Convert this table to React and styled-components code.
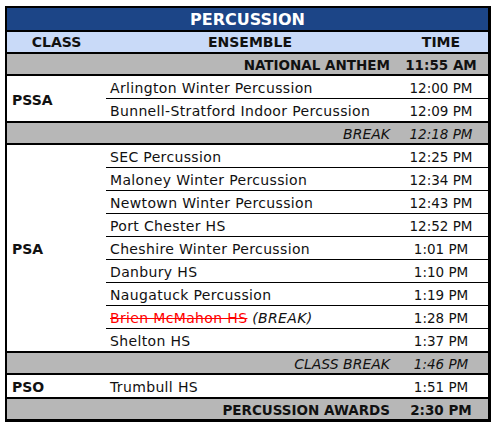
import React from 'react'
import styled, { createGlobalStyle } from 'styled-components'

const GlobalStyle = createGlobalStyle`
body {
  margin: 0;
  background: #fff;
}
`

const Table = styled.table`
margin: 6px 0 0 5px;
width: 486px;
border-collapse: separate;
border-spacing: 0;
table-layout: fixed;
border-style: solid;
border-color: #000;
border-width: 2px 3px 3px 2px;
font-family: "DejaVu Sans", "Liberation Sans", sans-serif;
font-size: 14px;
color: #111;
`

const lineWidth = { thin: '1px', thick: '2px', none: '0' }

const Cell = styled.td`
padding: 0;
height: ${p => p.$h}px;
border-bottom: ${p => lineWidth[p.$line || 'none']} solid #000;
white-space: nowrap;
overflow: hidden;
`

const TitleCell = styled(Cell)`
background: #1c4587;
color: #fff;
font-weight: bold;
font-size: 16px;
text-align: center;
`

const HeadCell = styled(Cell)`
background: #c9daf8;
font-weight: bold;
font-size: 14px;
text-align: center;
`

const ClassCell = styled(Cell)`
font-weight: bold;
padding: 2px 0 0 5px;
vertical-align: middle;
`

const EnsembleCell = styled(Cell)`
padding: 2px 0 0 4px;
letter-spacing: 0.35px;
`

const TimeCell = styled(Cell)`
padding-top: 2px;
text-align: center;
font-size: 13.5px;
`

const GreyLabel = styled(Cell)`
background: #b7b7b7;
text-align: right;
padding: 1px 4px 0 0;
font-weight: ${p => (p.$italic ? 'normal' : 'bold')};
font-style: ${p => (p.$italic ? 'italic' : 'normal')};
font-size: ${p => (p.$italic ? 14 : 13.5)}px;
`

const GreyTime = styled(GreyLabel)`
text-align: center;
padding-right: 0;
font-size: ${p => (p.$italic ? 13.5 : 13.5)}px;
`

const Scratched = styled.span`
color: #ff0000;
text-decoration: line-through;
`

const Note = styled.span`
font-style: italic;
`

const schedule = [
  { type: 'event', label: 'NATIONAL ANTHEM', time: '11:55 AM' },
  {
    type: 'class',
    name: 'PSSA',
    rows: [
      { name: 'Arlington Winter Percussion', time: '12:00 PM' },
      { name: 'Bunnell-Stratford Indoor Percussion', time: '12:09 PM' }
    ]
  },
  { type: 'break', label: 'BREAK', time: '12:18 PM' },
  {
    type: 'class',
    name: 'PSA',
    rows: [
      { name: 'SEC Percussion', time: '12:25 PM' },
      { name: 'Maloney Winter Percussion', time: '12:34 PM' },
      { name: 'Newtown Winter Percussion', time: '12:43 PM' },
      { name: 'Port Chester HS', time: '12:52 PM' },
      { name: 'Cheshire Winter Percussion', time: '1:01 PM' },
      { name: 'Danbury HS', time: '1:10 PM' },
      { name: 'Naugatuck Percussion', time: '1:19 PM' },
      { name: 'Brien McMahon HS', time: '1:28 PM', scratched: true, note: '(BREAK)' },
      { name: 'Shelton HS', time: '1:37 PM' }
    ]
  },
  { type: 'break', label: 'CLASS BREAK', time: '1:46 PM' },
  {
    type: 'class',
    name: 'PSO',
    rows: [{ name: 'Trumbull HS', time: '1:51 PM' }]
  },
  { type: 'event', label: 'PERCUSSION AWARDS', time: '2:30 PM', last: true }
]

function Ensemble ({ row }) {
  if (!row.scratched) return row.name
  return (
    <>
      <Scratched>{row.name}</Scratched> <Note>{row.note}</Note>
    </>
  )
}

function App () {
  const body = []
  schedule.forEach((item, i) => {
    if (item.type === 'class') {
      item.rows.forEach((row, j) => {
        const lastRow = j === item.rows.length - 1
        const line = lastRow ? 'thick' : 'thin'
        body.push(
          <tr key={`${i}-${j}`}>
            {j === 0 && (
              <ClassCell rowSpan={item.rows.length} $line='thick'>{item.name}</ClassCell>
            )}
            <EnsembleCell $h={20} $line={line}><Ensemble row={row} /></EnsembleCell>
            <TimeCell $h={20} $line={line}>{row.time}</TimeCell>
          </tr>
        )
      })
    } else {
      const italic = item.type === 'break'
      const line = item.last ? 'none' : 'thick'
      body.push(
        <tr key={i}>
          <GreyLabel colSpan={2} $h={19} $line={line} $italic={italic}>{item.label}</GreyLabel>
          <GreyTime $h={19} $line={line} $italic={italic}>{item.time}</GreyTime>
        </tr>
      )
    }
  })

  return (
    <>
      <GlobalStyle />
      <Table>
        <colgroup>
          <col style={{ width: 99 }} />
          <col style={{ width: 288 }} />
          <col style={{ width: 94 }} />
        </colgroup>
        <thead>
          <tr>
            <TitleCell colSpan={3} $h={22} $line='thick'>PERCUSSION</TitleCell>
          </tr>
          <tr>
            <HeadCell $h={20} $line='thick'>CLASS</HeadCell>
            <HeadCell $h={20} $line='thick'>ENSEMBLE</HeadCell>
            <HeadCell $h={20} $line='thick'>TIME</HeadCell>
          </tr>
        </thead>
        <tbody>{body}</tbody>
      </Table>
    </>
  )
}

export default App
